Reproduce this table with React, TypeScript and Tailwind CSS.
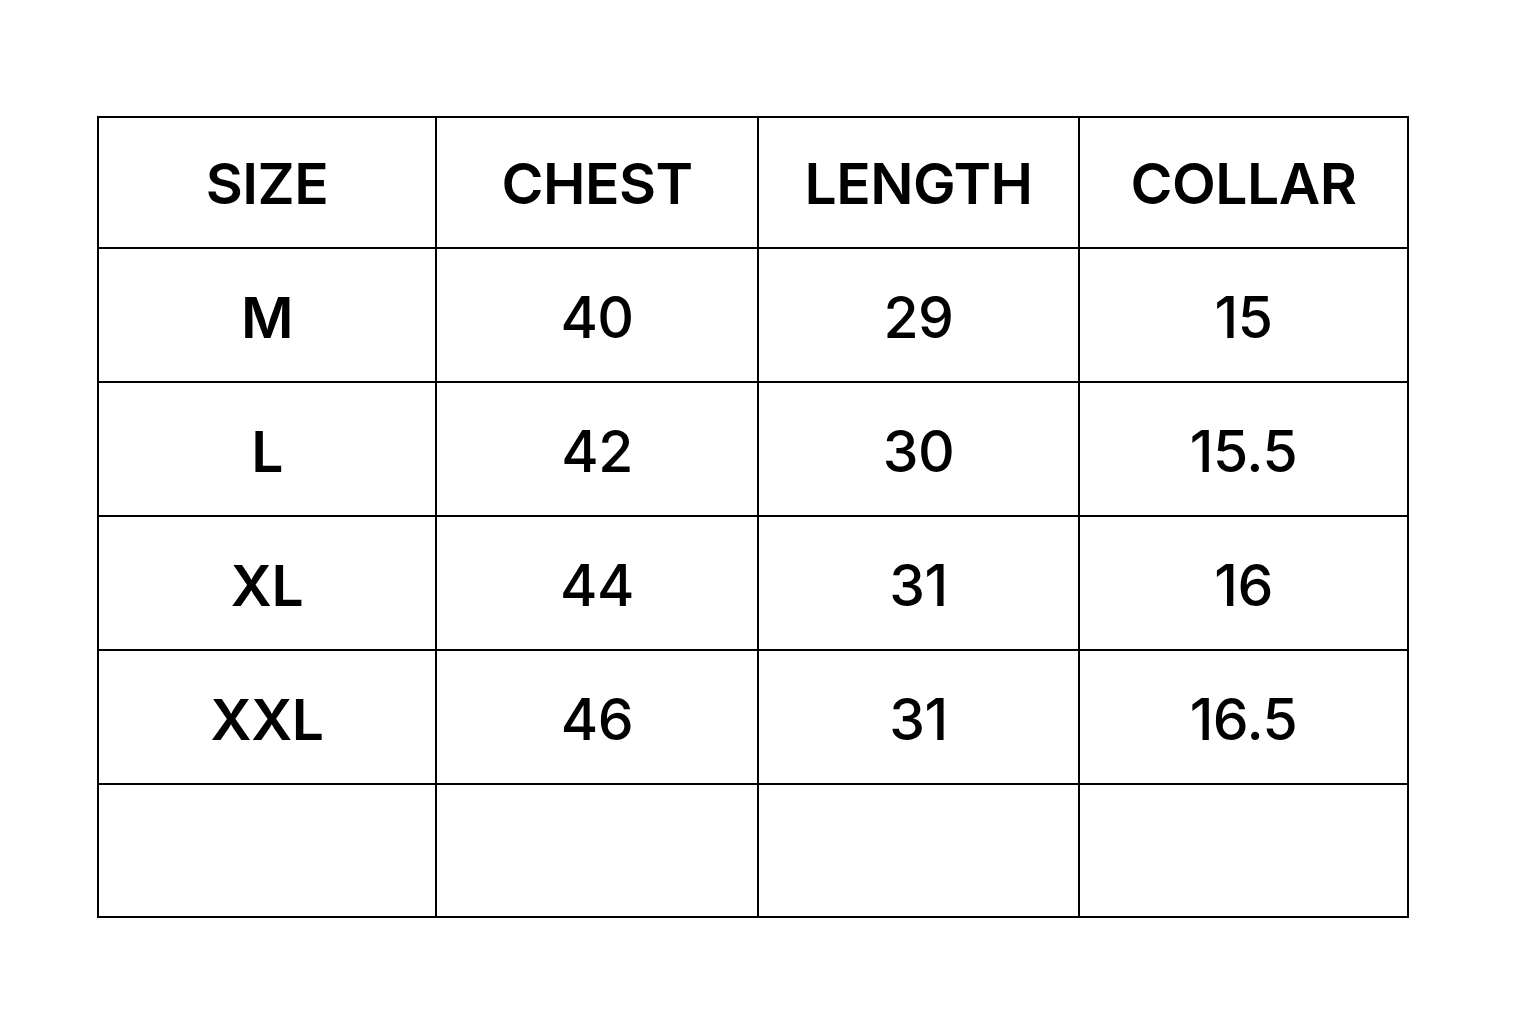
import React from 'react';

const headers = ['SIZE', 'CHEST', 'LENGTH', 'COLLAR'];

const rows: string[][] = [
  ['M', '40', '29', '15'],
  ['L', '42', '30', '15.5'],
  ['XL', '44', '31', '16'],
  ['XXL', '46', '31', '16.5'],
  ['', '', '', ''],
];

const colWidths = ['w-[338px]', 'w-[322px]', 'w-[321px]', 'w-[329px]'];

export default function App() {
  return (
    <div className="min-h-screen w-full bg-white pl-[97px] pt-[116px] font-['Inter','Liberation_Sans',sans-serif] text-black">
      <table className="border-collapse border-2 border-black">
        <thead>
          <tr className="h-[131px]">
            {headers.map((h, i) => (
              <th
                key={h}
                className={`${colWidths[i]} border-2 border-black p-0 pt-[2px] text-center align-middle text-[57px] font-semibold leading-none tracking-[-0.5px]`}
              >
                {h}
              </th>
            ))}
          </tr>
        </thead>
        <tbody>
          {rows.map((row, r) => (
            <tr key={r} className={r === 4 ? 'h-[133px]' : 'h-[134px]'}>
              {row.map((cell, c) => (
                <td
                  key={c}
                  className={`border-2 border-black p-0 pt-[4px] text-center align-middle text-[57px] leading-none tracking-[-0.5px] ${
                    c === 0 ? 'font-semibold' : 'font-medium'
                  }`}
                >
                  {cell}
                </td>
              ))}
            </tr>
          ))}
        </tbody>
      </table>
    </div>
  );
}
